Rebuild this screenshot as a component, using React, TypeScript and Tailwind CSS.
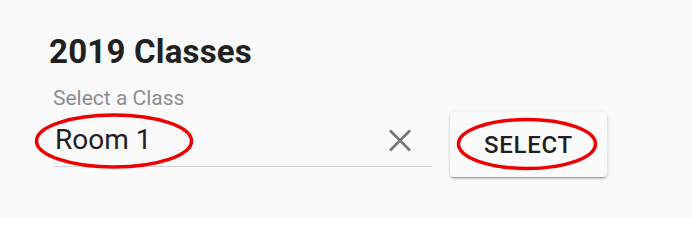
const font = { fontFamily: "Roboto, 'Liberation Sans', sans-serif" };

function CloseIcon() {
  return (
    <svg width="24" height="23" viewBox="0 0 24 23" className="shrink-0 text-[#757575]">
      <path d="M2 1.5 L22 21.5 M22 1.5 L2 21.5" stroke="currentColor" strokeWidth="2.6" fill="none" />
    </svg>
  );
}

/** 标注用的红色椭圆，叠在内容上方 */
function Annotations() {
  return (
    <svg className="pointer-events-none absolute inset-0" width="692" height="219">
      <ellipse cx="114" cy="141" rx="77.5" ry="26" fill="none" stroke="#ee0000" strokeWidth="3.5" />
      <ellipse cx="527" cy="144" rx="68.5" ry="24.5" fill="none" stroke="#ee0000" strokeWidth="3.5" />
    </svg>
  );
}

export default function App() {
  return (
    <div className="relative h-[219px] w-full overflow-hidden bg-[#fafafa]" style={font}>
      <h1 className="pl-[49px] pt-[35px] text-[33px] font-bold leading-[33px] tracking-[0.2px] text-[#212121]">
        2019 Classes
      </h1>
      <div className="flex items-start pl-[53px] pt-[20px]">
        <div className="flex w-[379px] flex-col">
          <label className="text-[21px] leading-[21px] text-[#8e8e8e]">Select a Class</label>
          <div className="flex items-center border-b border-[#d2d2d2] pb-[12px] pt-[17px]">
            <span className="flex-1 pl-[2px] text-[28px] leading-[28px] text-[#212121]">Room 1</span>
            <div className="mr-[20px]">
              <CloseIcon />
            </div>
          </div>
        </div>
        <button className="ml-[18px] mt-[24px] flex h-[65px] w-[157px] items-center justify-center rounded-[4px] bg-[#fbfbfb] text-[24px] font-medium tracking-[0.7px] text-[#212121] shadow-[0_3px_1px_-2px_rgba(0,0,0,0.2),0_2px_2px_0_rgba(0,0,0,0.14),0_1px_5px_0_rgba(0,0,0,0.12)]">
          SELECT
        </button>
      </div>
      <Annotations />
    </div>
  );
}
